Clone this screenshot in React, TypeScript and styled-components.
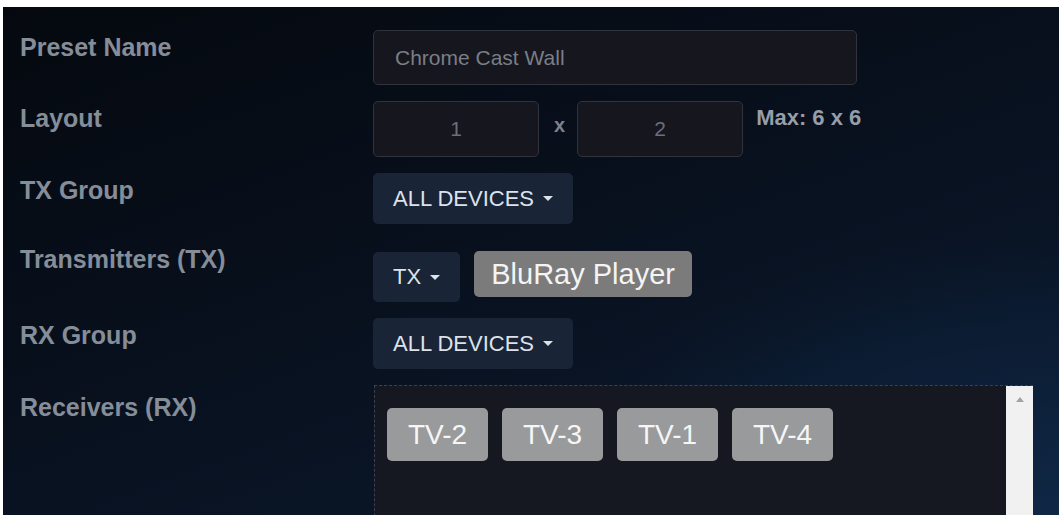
import React from "react";
import styled, { createGlobalStyle } from "styled-components";

const GlobalStyle = createGlobalStyle`
  html, body {
    margin: 0;
    padding: 0;
    background: #ffffff;
    overflow: hidden;
  }
  body {
    font-family: "Liberation Sans", Arial, sans-serif;
  }
`;

const receivers = ["TV-2", "TV-3", "TV-1", "TV-4"];

export default function App() {
  return (
    <>
      <GlobalStyle />
      <StyledPage>
        <StyledForm>
          <StyledRow>
            <StyledLabel>Preset Name</StyledLabel>
            <StyledTextInput defaultValue="Chrome Cast Wall" />
          </StyledRow>

          <StyledRow>
            <StyledLabel>Layout</StyledLabel>
            <StyledLayout>
              <StyledNumberInput defaultValue="1" />
              <span className="times">x</span>
              <StyledNumberInput defaultValue="2" />
              <span className="max">Max: 6 x 6</span>
            </StyledLayout>
          </StyledRow>

          <StyledRow>
            <StyledLabel>TX Group</StyledLabel>
            <StyledDropdown>
              ALL DEVICES <StyledCaret />
            </StyledDropdown>
          </StyledRow>

          <StyledRow>
            <StyledLabel $pad={5}>Transmitters (TX)</StyledLabel>
            <StyledTxControls>
              <StyledDropdown $height={50}>
                TX <StyledCaret />
              </StyledDropdown>
              <StyledSourceTag>BluRay Player</StyledSourceTag>
            </StyledTxControls>
          </StyledRow>

          <StyledRow>
            <StyledLabel>RX Group</StyledLabel>
            <StyledDropdown>
              ALL DEVICES <StyledCaret />
            </StyledDropdown>
          </StyledRow>

          <StyledRow>
            <StyledLabel $pad={8}>Receivers (RX)</StyledLabel>
            <StyledDropZone>
              <StyledDropContent>
                {receivers.map((name) => (
                  <StyledReceiverTag key={name}>{name}</StyledReceiverTag>
                ))}
              </StyledDropContent>
              <StyledScrollTrack>
                <span className="arrow" />
              </StyledScrollTrack>
            </StyledDropZone>
          </StyledRow>
        </StyledForm>
      </StyledPage>
    </>
  );
}

const StyledPage = styled.div`
  margin: 7px 0 0 3px;
  height: 508px;
  overflow: hidden;
  box-sizing: border-box;
  padding: 23px 0 0 17px;
  background:
    radial-gradient(ellipse 70% 80% at 100% 100%, #0f2745 0%, rgba(15, 39, 69, 0) 70%),
    linear-gradient(160deg, #05090f 0%, #08101d 45%, #0b1a2f 100%);
`;

const StyledForm = styled.div`
  display: flex;
  flex-direction: column;
  gap: 16px;
`;

const StyledRow = styled.div`
  display: flex;
  align-items: flex-start;
`;

const StyledLabel = styled.div<{ $pad?: number }>`
  flex: 0 0 353px;
  padding-top: ${(p) => p.$pad ?? 3}px;
  font-size: 25px;
  font-weight: 700;
  color: #858d99;
`;

const StyledTextInput = styled.input`
  width: 484px;
  height: 55px;
  box-sizing: border-box;
  padding: 0 21px;
  border: 1px solid #30333b;
  border-radius: 5px;
  background: #15161e;
  font-family: "Liberation Sans", Arial, sans-serif;
  font-size: 21px;
  color: #7a7e87;
  outline: none;
`;

const StyledLayout = styled.div`
  display: flex;
  align-items: flex-start;

  & > .times {
    margin: 0 12px 0 15px;
    padding-top: 13px;
    font-size: 20px;
    font-weight: 700;
    color: #7c818b;
  }

  & > .max {
    margin-left: 13px;
    padding-top: 4px;
    font-size: 22px;
    font-weight: 700;
    color: #979ea8;
  }
`;

const StyledNumberInput = styled.input`
  width: 166px;
  height: 56px;
  box-sizing: border-box;
  border: 1px solid #30333b;
  border-radius: 5px;
  background: #15161e;
  text-align: center;
  font-family: "Liberation Sans", Arial, sans-serif;
  font-size: 21px;
  color: #6b6f78;
  outline: none;
`;

const StyledDropdown = styled.button<{ $height?: number }>`
  display: inline-flex;
  align-items: center;
  height: ${(p) => p.$height ?? 51}px;
  padding: 0 20px;
  border: none;
  border-radius: 5px;
  background: #1a2437;
  font-family: "Liberation Sans", Arial, sans-serif;
  font-size: 22px;
  color: #dde2ea;
  white-space: pre;
`;

const StyledCaret = styled.span`
  display: inline-block;
  margin-left: 3px;
  width: 0;
  height: 0;
  border-left: 5px solid transparent;
  border-right: 5px solid transparent;
  border-top: 5px solid #dde2ea;
`;

const StyledTxControls = styled.div`
  display: flex;
  align-items: flex-start;
  gap: 14px;
  padding-top: 12px;
`;

const StyledSourceTag = styled.div`
  display: inline-flex;
  align-items: center;
  height: 46px;
  margin-top: -1px;
  padding: 0 17px;
  border-radius: 5px;
  background: #7b7b7c;
  font-size: 29px;
  color: #f4f4f4;
`;

const StyledDropZone = styled.div`
  display: flex;
  width: 658px;
  height: 140px;
  margin-left: 1px;
  border-top: 1px dashed #3b4150;
  border-left: 1px dashed #3b4150;
  background: #161821;
`;

const StyledDropContent = styled.div`
  flex: 1;
  display: flex;
  align-items: flex-start;
  gap: 14px;
  padding: 22px 0 0 12px;
`;

const StyledReceiverTag = styled.div`
  display: flex;
  align-items: center;
  justify-content: center;
  width: 101px;
  height: 53px;
  border-radius: 5px;
  background: #999a9c;
  font-size: 28px;
  color: #f6f6f6;
`;

const StyledScrollTrack = styled.div`
  flex: 0 0 27px;
  display: flex;
  justify-content: center;
  background: #f1f1f1;

  & > .arrow {
    margin-top: 11px;
    width: 0;
    height: 0;
    border-left: 4px solid transparent;
    border-right: 4px solid transparent;
    border-bottom: 5px solid #a3a3a3;
  }
`;
